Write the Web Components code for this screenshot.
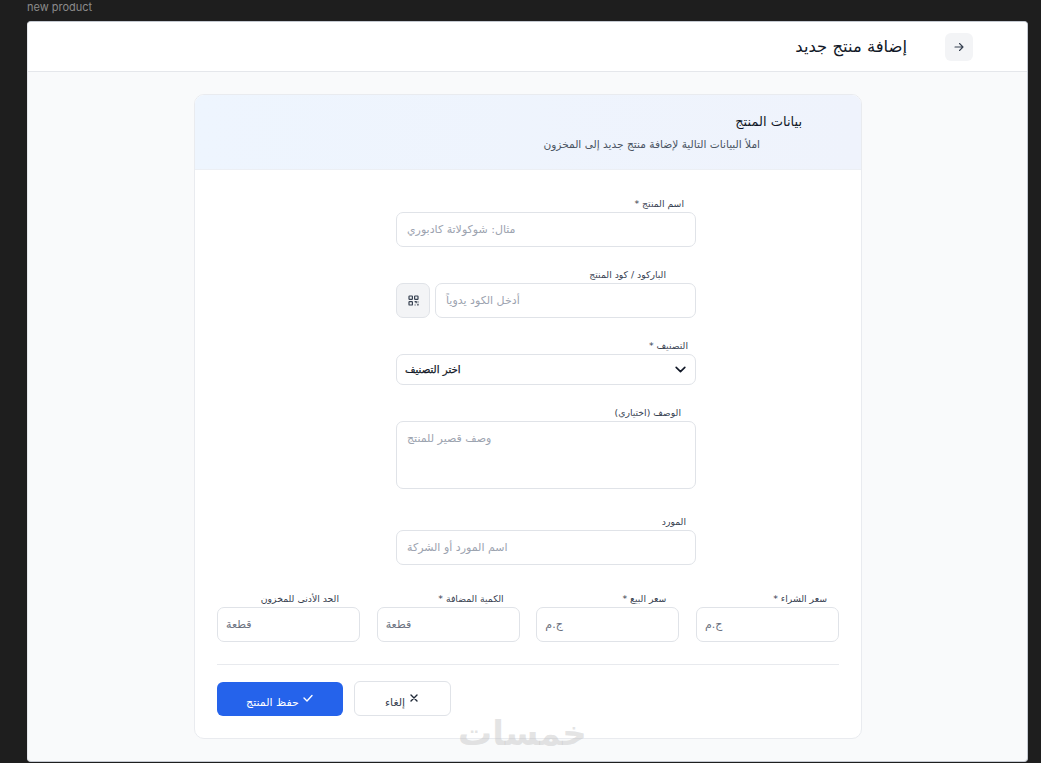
<!DOCTYPE html>
<html lang="ar">
<head>
<meta charset="utf-8">
<title>new product</title>
<style>
  html, body { margin: 0; height: 100%; }
  body {
    background: #1e1e1e;
    font-family: "Noto Sans", "DejaVu Sans", sans-serif;
    overflow: hidden;
  }
</style>
</head>
<body>

<product-page>
  <page-header slot="header" title-text="إضافة منتج جديد"></page-header>
  <product-card heading="بيانات المنتج" sub="املأ البيانات التالية لإضافة منتج جديد إلى المخزون">

    <div slot="top">
      <form-field label="اسم المنتج *" label-end="12" placeholder="مثال: شوكولاتة كادبوري"></form-field>
      <form-field label="الباركود / كود المنتج" label-end="30" placeholder="أدخل الكود يدوياً" scan></form-field>
      <form-field label="التصنيف *" label-end="8" type="select" value="اختر التصنيف"></form-field>
      <form-field label="الوصف (اختياري)" label-end="15" type="area" placeholder="وصف قصير للمنتج"></form-field>
      <form-field label="المورد" label-end="10" placeholder="اسم المورد أو الشركة"></form-field>
    </div>

    <form-field slot="grid" label="سعر الشراء *" label-end="12" placeholder="ج.م" small></form-field>
    <form-field slot="grid" label="سعر البيع *" label-end="13" placeholder="ج.م" small></form-field>
    <form-field slot="grid" label="الكمية المضافة *" label-end="16" placeholder="قطعة" small></form-field>
    <form-field slot="grid" label="الحد الأدنى للمخزون" label-end="21" placeholder="قطعة" small></form-field>

    <app-button slot="actions" kind="primary" text="حفظ المنتج" icon="check"></app-button>
    <app-button slot="actions" kind="ghost" text="إلغاء" icon="x"></app-button>
  </product-card>
</product-page>

<script>
class ProductPage extends HTMLElement {
    constructor() {
        super();
        this.attachShadow({ mode: 'open' });
    }

    connectedCallback() {
        this.shadowRoot.innerHTML = `
            <style>
                :host {
                    display: flex;
                    flex-direction: column;
                    height: 763px;
                    padding: 0 13px 1px 27px;
                    box-sizing: border-box;
                }

                .caption {
                    height: 21px;
                    padding-top: 1px;
                    box-sizing: border-box;
                    font: 11px/13px "Inter", sans-serif;
                    color: #8b8b8b;
                }

                .window {
                    flex: 1;
                    min-height: 0;
                    position: relative;
                    display: flex;
                    flex-direction: column;
                    background: #f9fafb;
                    border: 1px solid #c4c9d1;
                    border-left-color: #e5e7eb;
                    border-radius: 4px;
                    overflow: hidden;
                }

                .body {
                    flex: 1;
                    padding: 22px 166px 0;
                }

                /* khamsat mark, sits over the card edge */
                .mark {
                    position: absolute;
                    left: 430px;
                    top: 691px;
                    font: 700 34px/40px "DejaVu Sans", sans-serif;
                    color: rgba(190, 190, 190, .42);
                }
            </style>
            <div class="caption">new product</div>
            <div class="window">
                <slot name="header"></slot>
                <div class="body"><slot></slot></div>
                <div class="mark" dir="rtl">خمسات</div>
            </div>
        `;
    }
}

class PageHeader extends HTMLElement {
    constructor() {
        super();
        this.attachShadow({ mode: 'open' });
    }

    connectedCallback() {
        this.shadowRoot.innerHTML = `
            <style>
                :host {
                    display: flex;
                    direction: rtl;
                    align-items: center;
                    gap: 38px;
                    height: 49px;
                    padding: 0 54px 0 0;
                    background: #fff;
                    border-bottom: 1px solid #e5e7eb;
                }

                .back {
                    width: 28px;
                    height: 28px;
                    border-radius: 6px;
                    background: #f3f4f6;
                    display: flex;
                    align-items: center;
                    justify-content: center;
                }

                h1 {
                    margin: 0;
                    font: 400 16.4px/24px "DejaVu Sans", sans-serif;
                    color: #111827;
                }
            </style>
            <div class="back">
                <svg width="12" height="12" viewBox="0 0 24 24" fill="none" stroke="#374151" stroke-width="2.2" stroke-linecap="round" stroke-linejoin="round">
                    <path d="M4 12h16M13 5l7 7-7 7"/>
                </svg>
            </div>
            <h1>${this.getAttribute('title-text')}</h1>
        `;
    }
}

class ProductCard extends HTMLElement {
    constructor() {
        super();
        this.attachShadow({ mode: 'open' });
    }

    connectedCallback() {
        this.shadowRoot.innerHTML = `
            <style>
                :host {
                    display: block;
                    direction: rtl;
                    width: 668px;
                    height: 645px;
                    box-sizing: border-box;
                    background: #fff;
                    border: 1px solid #e9ebef;
                    border-radius: 10px;
                    overflow: hidden;
                }

                .head {
                    height: 75px;
                    box-sizing: border-box;
                    padding: 17px 59px 0 0;
                    background: linear-gradient(90deg, #eef5fe, #eff3fc);
                    border-bottom: 1px solid #eceff4;
                }

                h2 {
                    margin: 0;
                    font: 400 13px/20px "DejaVu Sans", sans-serif;
                    color: #111827;
                }

                .head p {
                    margin: 4px 42px 0 0;
                    font: 400 10.6px/16px "DejaVu Sans", sans-serif;
                    color: #4b5563;
                }

                .main {
                    padding: 25px 22px 0;
                }

                .top {
                    width: 300px;
                    margin: 0 143px 0 0;
                }

                .grid {
                    display: grid;
                    grid-template-columns: repeat(4, 143px);
                    justify-content: space-between;
                    margin-top: 25px;
                }

                hr {
                    border: 0;
                    border-top: 1px solid #e8eaee;
                    margin: 22px 0 16px;
                }

                .actions {
                    display: flex;
                    direction: ltr;
                    align-items: flex-start;
                    gap: 11px;
                }
            </style>
            <div class="head">
                <h2>${this.getAttribute('heading')}</h2>
                <p>${this.getAttribute('sub')}</p>
            </div>
            <div class="main">
                <div class="top"><slot name="top"></slot></div>
                <div class="grid"><slot name="grid"></slot></div>
                <hr>
                <div class="actions"><slot name="actions"></slot></div>
            </div>
        `;
    }
}

class FormField extends HTMLElement {
    constructor() {
        super();
        this.attachShadow({ mode: 'open' });
    }

    connectedCallback() {
        const label = this.getAttribute('label') || '';
        const labelEnd = this.getAttribute('label-end') || 0;
        const placeholder = this.getAttribute('placeholder') || '';
        const type = this.getAttribute('type') || 'text';
        const value = this.getAttribute('value') || '';

        this.shadowRoot.innerHTML = `
            <style>
                :host {
                    display: block;
                    direction: rtl;
                    margin-bottom: 19px;
                }

                :host([type="area"]) {
                    margin-bottom: 24px;
                }

                :host([small]) {
                    margin-bottom: 0;
                }

                label {
                    display: block;
                    height: 17px;
                    font: 400 9.3px/17px "DejaVu Sans", sans-serif;
                    color: #374151;
                }

                .row {
                    display: flex;
                    gap: 5px;
                }

                .box {
                    flex: 1;
                    min-width: 0;
                    height: 35px;
                    box-sizing: border-box;
                    display: flex;
                    align-items: center;
                    padding: 0 10px;
                    background: #fff;
                    border: 1px solid #e0e3e8;
                    border-radius: 7px;
                    font: 400 11px/16px "DejaVu Sans", sans-serif;
                    color: #9ca3af;
                }

                .box.area {
                    height: 68px;
                    align-items: flex-start;
                    padding-top: 9px;
                }

                .box.select {
                    justify-content: space-between;
                    height: 31px;
                    padding: 0 8px;
                    font-size: 10.2px;
                    color: #111827;
                    -webkit-text-stroke: .25px #111827;
                }

                :host([small]) .box {
                    padding: 0 8px;
                    color: #6b7280;
                }

                .scan {
                    width: 34px;
                    height: 35px;
                    box-sizing: border-box;
                    flex: none;
                    display: flex;
                    align-items: center;
                    justify-content: center;
                    background: #f3f4f6;
                    border: 1px solid #e0e3e8;
                    border-radius: 7px;
                }
            </style>
            <label style="padding-right:${labelEnd}px">${label}</label>
            <div class="row">${this.renderBox(type, placeholder, value)}${this.hasAttribute('scan') ? this.renderScan() : ''}</div>
        `;
    }

    renderBox(type, placeholder, value) {
        if (type === 'select') {
            return `
                <div class="box select">
                    <svg width="13" height="13" viewBox="0 0 24 24" fill="none" stroke="#111827" stroke-width="3" stroke-linecap="round" stroke-linejoin="round"><path d="M4 8l8 8 8-8"/></svg>
                    <span>${value}</span>
                </div>`;
        }
        if (type === 'area') {
            return `<div class="box area" style="justify-content:flex-end"><span>${placeholder}</span></div>`;
        }
        return `<div class="box" style="justify-content:flex-end"><span>${placeholder}</span></div>`;
    }

    renderScan() {
        return `
            <div class="scan">
                <svg width="11" height="11" viewBox="0 0 11 11" fill="none" stroke="#374151" stroke-width="1.2">
                    <rect x="1" y="1" width="3.4" height="3.4" rx=".6"/>
                    <rect x="6.6" y="1" width="3.4" height="3.4" rx=".6"/>
                    <rect x="1" y="6.6" width="3.4" height="3.4" rx=".6"/>
                    <path d="M6.6 6.6h1.6v1.6M10 6.6v.8M6.6 10h1M9.2 10h.8V8.8"/>
                </svg>
            </div>`;
    }
}

class AppButton extends HTMLElement {
    constructor() {
        super();
        this.attachShadow({ mode: 'open' });
    }

    connectedCallback() {
        const icons = {
            check: '<path d="M4 12l6 6L20 7"/>',
            x: '<path d="M6 6l12 12M18 6L6 18"/>'
        };
        const primary = this.getAttribute('kind') === 'primary';

        this.shadowRoot.innerHTML = `
            <style>
                :host {
                    display: inline-flex;
                    direction: rtl;
                    align-items: center;
                    justify-content: center;
                    gap: 3px;
                    box-sizing: border-box;
                    border-radius: 6px;
                    font: 400 11px/16px "DejaVu Sans", sans-serif;
                    width: ${primary ? 126 : 97}px;
                    height: ${primary ? 34 : 35}px;
                    margin-top: ${primary ? 1 : 0}px;
                    background: ${primary ? '#2563eb' : '#fff'};
                    color: ${primary ? '#fff' : '#374151'};
                    border: ${primary ? '0' : '1px solid #e0e3e8'};
                }

                svg {
                    margin-top: -2px;
                }

                span {
                    margin-top: 8px;
                }
            </style>
            <svg width="12" height="12" viewBox="0 0 24 24" fill="none" stroke="${primary ? '#fff' : '#1f2937'}" stroke-width="2.8" stroke-linecap="round" stroke-linejoin="round">${icons[this.getAttribute('icon')]}</svg>
            <span>${this.getAttribute('text')}</span>
        `;
    }
}

customElements.define('product-page', ProductPage);
customElements.define('page-header', PageHeader);
customElements.define('product-card', ProductCard);
customElements.define('form-field', FormField);
customElements.define('app-button', AppButton);
</script>
</body>
</html>
